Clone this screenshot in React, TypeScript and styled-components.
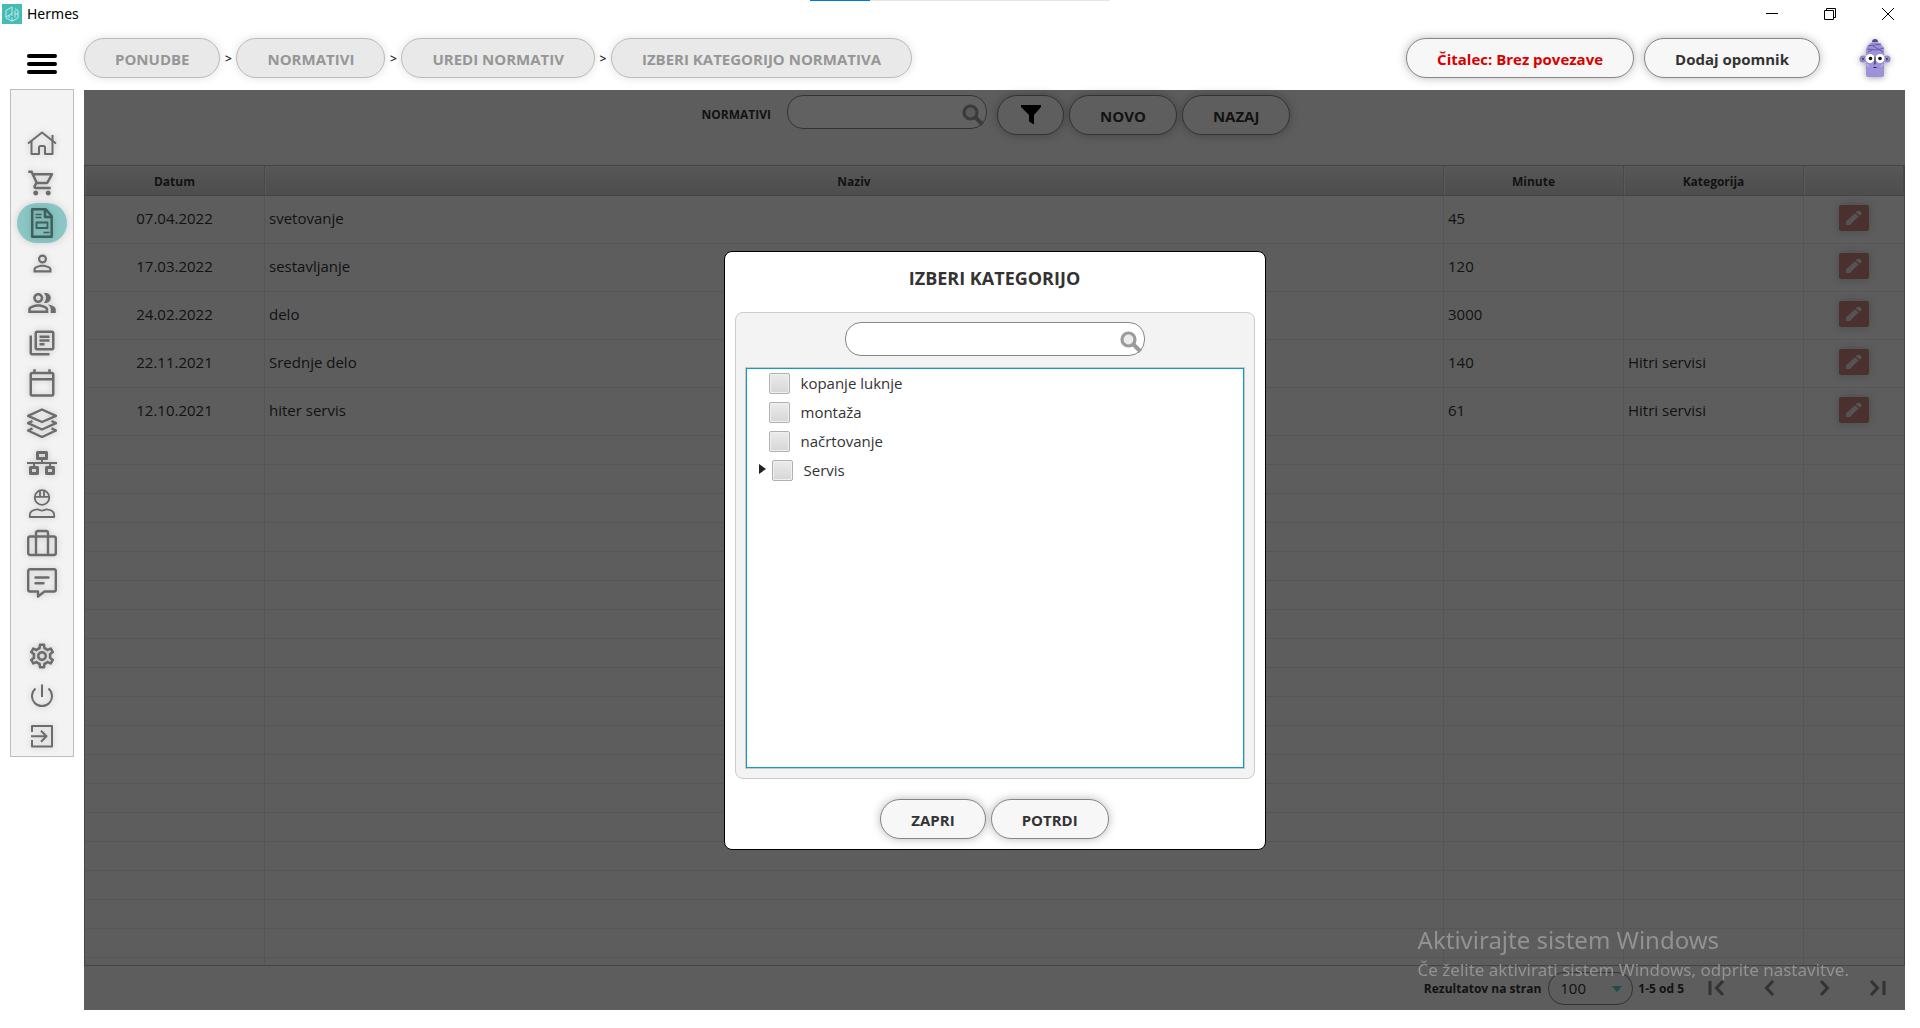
import React from "react";
import styled, { createGlobalStyle } from "styled-components";
import {
  MdOutlineShoppingCart,
  MdPersonOutline,
  MdOutlinePeopleAlt,
  MdOutlineLibraryBooks,
  MdOutlineCalendarToday,
  MdOutlineSettings,
} from "react-icons/md";

const GlobalStyle = createGlobalStyle`
  *, *::before, *::after { box-sizing: border-box; }
  body {
    margin: 0;
    background: #fff;
    color: #333;
    font-family: "Open Sans", "Noto Sans", sans-serif;
    font-size: 15px;
  }
  button, input, select { font: inherit; color: inherit; margin: 0; }
`;

/* ---------- window frame ---------- */

const Page = styled.div`
  display: flex;
  flex-direction: column;
  height: 100vh;
  min-height: 860px;
  overflow: hidden;
`;

const TitleBar = styled.div`
  position: relative;
  display: flex;
  align-items: center;
  justify-content: space-between;
  height: 28px;
  padding: 0 3px 0 2px;
`;

const AppName = styled.div`
  display: flex;
  align-items: center;
  gap: 5px;
  color: #000;
  font-family: "Noto Sans", sans-serif;
  font-size: 14px;
  line-height: 20px;
`;

const WindowControls = styled.div`
  display: flex;
`;

const WindowButton = styled.button`
  display: grid;
  place-items: center;
  width: 58px;
  height: 28px;
  padding: 0;
  border: 0;
  background: none;
`;

const LoadTrack = styled.div`
  position: absolute;
  top: 0;
  left: 50%;
  width: 300px;
  height: 1px;
  transform: translateX(-50%);
  background: #e6e6e6;
`;

const LoadValue = styled.div`
  width: 20%;
  height: 1px;
  background: #0078d7;
`;

/* ---------- shared controls ---------- */

const Pill = styled.button<{ $tone?: "muted" | "alert" }>`
  height: 40px;
  padding: 2px 30px 0;
  border: 1px solid ${(p) => (p.$tone === "muted" ? "#bbb" : "#868686")};
  border-radius: 20px;
  background: ${(p) => (p.$tone === "muted" ? "#e9e9e9" : "#f7f7f7")};
  box-shadow: 0 0 10px ${(p) => (p.$tone === "muted" ? "rgba(0,0,0,.12)" : "rgba(0,0,0,.28)")};
  color: ${(p) => (p.$tone === "muted" ? "#969696" : p.$tone === "alert" ? "#d90000" : "#333")};
  font-size: 15px;
  font-weight: 700;
  line-height: 20px;
  white-space: nowrap;
`;

const IconPill = styled(Pill)`
  display: grid;
  place-items: center;
  width: 67px;
  padding: 0;
`;

const SearchBox = styled.div<{ $width: number }>`
  position: relative;
  width: ${(p) => p.$width}px;
  height: 34px;

  svg {
    position: absolute;
    right: 3px;
    bottom: 3px;
  }
`;

const SearchInput = styled.input`
  display: block;
  width: 100%;
  height: 100%;
  padding: 0 28px 0 14px;
  border: 1px solid #868686;
  border-radius: 16px;
  background: #fff;
  outline: none;
`;

/* ---------- header ---------- */

const Header = styled.header`
  display: flex;
  align-items: flex-start;
  height: 61px;
  padding-top: 10px;
`;

const MenuButton = styled.button`
  display: grid;
  place-items: center;
  width: 84px;
  height: 51px;
  padding: 0;
  border: 0;
  background: none;
`;

const Breadcrumb = styled.nav`
  display: flex;
  align-items: center;
  flex: 1;
`;

const Separator = styled.span`
  width: 16px;
  color: #222;
  font-size: 12px;
  font-weight: 600;
  text-align: center;
`;

const HeaderActions = styled.div`
  display: flex;
  gap: 10px;
`;

const Avatar = styled.button`
  display: grid;
  place-items: center;
  width: 90px;
  height: 40px;
  padding: 0;
  border: 0;
  background: none;

  svg { filter: drop-shadow(0 1px 3px rgba(0, 0, 0, 0.35)); }
`;

/* ---------- body ---------- */

const Body = styled.div`
  display: flex;
  flex: 1;
  align-items: flex-start;
  min-height: 0;
`;

const Sidebar = styled.nav`
  display: flex;
  flex-direction: column;
  align-items: center;
  gap: 33px;
  width: 64px;
  margin: 0 10px;
  padding-top: 33px;
  border: 1px solid #bdbdbd;
  background: #f3f3f3;
`;

const SideGroup = styled.div`
  display: flex;
  flex-direction: column;
`;

const SideButton = styled.button<{ $active?: boolean }>`
  display: grid;
  place-items: center;
  width: 50px;
  height: 40px;
  padding: 0;
  border: 0;
  border-radius: 20px;
  background: ${(p) => (p.$active ? "#8ac7c4" : "none")};
  color: ${(p) => (p.$active ? "#3d5f5d" : "#6c6c6c")};
  box-shadow: ${(p) => (p.$active ? "0 0 8px rgba(0,0,0,.15)" : "none")};

  svg { filter: drop-shadow(0 0 3px rgba(0, 0, 0, 0.2)); }
`;

const Main = styled.main`
  position: relative;
  display: flex;
  flex: 1;
  flex-direction: column;
  align-self: stretch;
  min-width: 0;
  margin: 1px 15px 18px 0;
  background: #f3f3f3;
`;

const Toolbar = styled.div`
  display: flex;
  justify-content: center;
  height: 75px;
  padding: 5px 0 0 3px;
`;

const ToolbarLabel = styled.label`
  margin-right: 16px;
  font-size: 12px;
  font-weight: 700;
  line-height: 40px;
`;

const ToolbarButtons = styled.div`
  display: flex;
  gap: 5px;
  margin-left: 10px;
`;

const TableFrame = styled.div`
  flex: 1;
  min-height: 0;
  overflow: hidden;
  border: 1px solid #b4b4b4;
`;

const Table = styled.table`
  width: 100%;
  table-layout: fixed;
  border-collapse: separate;
  border-spacing: 0;
`;

const HeadCell = styled.th<{ $width?: number }>`
  width: ${(p) => (p.$width ? `${p.$width}px` : "auto")};
  height: 30px;
  padding: 2px 0 0;
  border-right: 1px solid #c0c0c0;
  border-bottom: 1px solid #b4b4b4;
  background: linear-gradient(#e6e6e6, #cacaca);
  box-shadow: inset 1px 1px 0 #ededed;
  font-size: 12px;
  font-weight: 700;
`;

const Cell = styled.td<{ $align?: "center" }>`
  height: 48px;
  padding: 0 4px 4px;
  border-right: 1px solid #e0e0e0;
  border-bottom: 1px solid #e3e3e3;
  line-height: 20px;
  text-align: ${(p) => p.$align ?? "left"};

  &:last-child { border-right-color: transparent; }
`;

const FillerCell = styled(Cell)`
  height: 29px;
`;

const EditButton = styled.button`
  display: inline-grid;
  place-items: center;
  width: 30px;
  height: 26px;
  padding: 0;
  border: 0;
  border-radius: 2px;
  background: #c67f7f;
  box-shadow: 0 0 8px rgba(0, 0, 0, 0.2);
  vertical-align: middle;
`;

const Pager = styled.footer`
  display: flex;
  align-items: center;
  justify-content: flex-end;
  height: 44px;
  font-size: 12px;
  font-weight: 700;
`;

const PageSize = styled.div`
  position: relative;
  width: 85px;
  height: 33px;
  margin: 0 5px 0 7px;

  svg {
    position: absolute;
    top: 14px;
    right: 11px;
    pointer-events: none;
  }
`;

const PageSelect = styled.select`
  width: 100%;
  height: 100%;
  padding: 0 0 0 11px;
  border: 1px solid #868686;
  border-radius: 16px;
  background: transparent;
  font-size: 15px;
  font-weight: 400;
  appearance: none;
`;

const PageInfo = styled.span`
  margin-right: 5px;
`;

const PagerButton = styled.button`
  display: grid;
  place-items: center;
  width: 54px;
  height: 44px;
  padding: 0;
  border: 0;
  background: none;
  color: #868686;
`;

/* ---------- dialog ---------- */

const Backdrop = styled.div`
  position: absolute;
  inset: 0;
  display: grid;
  place-items: center;
  background: rgba(0, 0, 0, 0.62);
`;

const Dialog = styled.section`
  display: flex;
  flex-direction: column;
  width: 542px;
  padding: 10px;
  border: 1px solid #000;
  border-radius: 8px;
  background: #fff;
`;

const DialogTitle = styled.h2`
  margin: 0 0 18px;
  font-size: 18px;
  line-height: 32px;
  text-align: center;
`;

const Picker = styled.div`
  display: flex;
  flex-direction: column;
  align-items: center;
  gap: 11px;
  padding: 9px;
  border: 1px solid #ccc;
  border-radius: 8px;
  background: #f3f3f3;
`;

const Tree = styled.ul`
  align-self: stretch;
  height: 402px;
  margin: 0;
  padding: 0;
  border: 1px solid #c8c8c8;
  background: #fff;
  box-shadow: inset 0 0 0 1px #0d9ccb;
  list-style: none;
`;

const TreeItem = styled.li`
  display: flex;
  align-items: center;
  height: 29px;
  padding-left: 12px;

  &:first-child { margin-top: 1px; }
`;

const Expander = styled.button`
  display: flex;
  width: 14px;
  height: 12px;
  padding: 0;
  border: 0;
  background: none;
`;

const TreeLabel = styled.label<{ $leaf: boolean }>`
  display: flex;
  align-items: center;
  gap: 11px;
  padding-left: ${(p) => (p.$leaf ? 11 : 0)}px;
  line-height: 20px;
`;

const Checkbox = styled.input`
  width: 21px;
  height: 21px;
  border: 1px solid #b0b0b0;
  border-radius: 2px;
  background: linear-gradient(#ebebeb, #d6d6d6);
  box-shadow: inset 0 0 0 1px #f0f0f0;
  appearance: none;
`;

const DialogActions = styled.div`
  display: flex;
  justify-content: center;
  gap: 5px;
  margin-top: 20px;
`;

const Watermark = styled.div`
  position: fixed;
  right: 71px;
  bottom: 45px;
  color: #929292;
  font-family: "Noto Sans", sans-serif;
  pointer-events: none;
`;

const WatermarkTitle = styled.p`
  margin: 0;
  font-size: 24px;
  line-height: 32px;
`;

const WatermarkText = styled.p`
  margin: 0;
  font-size: 17px;
  line-height: 27px;
`;

/* ---------- drawings ---------- */

const Stroke = ({ w = 2, children }: { w?: number; children: React.ReactNode }) => (
  <svg width="30" height="30" viewBox="0 0 30 30" fill="none" stroke="currentColor" strokeWidth={w} strokeLinejoin="round">
    {children}
  </svg>
);

const HomeIcon = () => (
  <Stroke>
    <path d="M1 15.500 15 4.500 29 15.500" />
    <path d="M4.500 13v13H12v-6.500q0-1.500 1.500-1.500h3q1.500 0 1.500 1.500V26h7.500V7" />
  </Stroke>
);

const DocumentIcon = () => (
  <Stroke w={2.5}>
    <path d="M5.200 1.300h13.500l6 7v20.400H5.200z" />
    <path d="M18 1.500v7.500h7" />
    <path d="M8.500 6.500h6M8.500 9.500h6M16.500 24.500h6" strokeWidth="1.600" />
    <path d="M9.500 14.500h11v5.500h-11z" strokeWidth="1.800" />
  </Stroke>
);

const LayersIcon = () => (
  <Stroke w={2.4}>
    <path d="M15 1.500 29 7.800 15 14 1 7.800z" />
    <path d="M5.500 13 1 15.200l14 6.300 14-6.300L24.500 13" />
    <path d="M5.500 20.300 1 22.500l14 6.500 14-6.500-4.500-2.200" />
  </Stroke>
);

const NetworkIcon = () => (
  <Stroke>
    <path d="M10.500 4.500h9v6h-9zM3.500 19.500h7v6h-7zM19.500 19.500h7v6h-7z" strokeWidth="3" />
    <path d="M0 15h30M15 11v4M7 15v4M23 15v4" />
  </Stroke>
);

const WorkerIcon = () => (
  <Stroke w={1.8}>
    <circle cx="15" cy="9.500" r="7.300" />
    <path d="M7 8.800h16M13 8.500V2.300M17 8.500V2.300" />
    <path d="M2.800 29v-2q0-5 7.700-5.700 4.500 2.500 9 0 7.700.7 7.700 5.700v2z" />
  </Stroke>
);

const LuggageIcon = () => (
  <Stroke w={2.4}>
    <rect x="1.200" y="8.500" width="27.600" height="18.500" rx="2" />
    <path d="M9 27V5q0-2 2-2h8q2 0 2 2v22" />
  </Stroke>
);

const MessageIcon = () => (
  <Stroke w={2.4}>
    <path d="M3 1.200h24q1.800 0 1.800 2v18.300q0 2-1.800 2h-9.500L11 28.500v-5H3q-1.800 0-1.800-2V3.200q0-2 1.800-2z" />
    <path d="M8.500 9.500h13M8.500 15.200h8" strokeLinecap="round" />
  </Stroke>
);

const PowerIcon = () => (
  <Stroke>
    <path d="M15 3.500V16M8.500 7.500a10 10 0 1 0 13 0" />
  </Stroke>
);

const ExitIcon = () => (
  <Stroke>
    <path d="M5 11V5h20v20.500H5V19M4 15.200h15M14 9.700l5.500 5.500-5.500 5.500" />
  </Stroke>
);

const SearchIcon = () => (
  <svg width="22" height="22" viewBox="0 0 22 22" fill="none" stroke="#9c9c9c" strokeWidth="3.200">
    <circle cx="8.500" cy="8.500" r="6.500" fill="#ececec" />
    <path d="m13 13 7.500 7.500" strokeWidth="4" />
  </svg>
);

const FunnelIcon = () => (
  <svg width="20" height="20" viewBox="0 0 20 20">
    <path d="M0 0h20v2l-7 8v9.500l-5-3V10L0 2z" fill="#000" />
  </svg>
);

const PencilIcon = () => (
  <svg width="18" height="16" viewBox="0 0 18 16" fill="#dcdcdc">
    <path d="M1 15v-3.500L9.800 3.200l3.800 3L5 15zM10.800 2.300l1.200-1q1.500-.9 3 0l1.200 1q1 1.200 0 2.200l-1.400 1.100z" />
  </svg>
);

const Logo = () => (
  <svg width="20" height="20" viewBox="0 0 20 20" fill="none" stroke="#c4ebe8" strokeWidth="1">
    <rect width="20" height="20" fill="#45bdb7" stroke="none" />
    <path d="M10 3 4 6.500v7.500l6 3.200 6-3.200V6.500l-3-1.800M10 3v9M4 13l6-3.500M10 17v-3.500M13 6.500v7M7 11.500V14M16 10h-3" />
  </svg>
);

const AvatarDrawing = () => (
  <svg width="32" height="38" viewBox="0 0 32 38">
    <circle cx="4" cy="20" r="3.500" fill="#9087cf" />
    <circle cx="28" cy="20" r="3.500" fill="#9087cf" />
    <circle cx="4" cy="20" r="1" fill="#40386e" />
    <circle cx="28" cy="20" r="1" fill="#40386e" />
    <path d="M7 36V11q2-8 9-8t9 8v25q0 2-2 2H9q-2 0-2-2z" fill="#9d92d8" />
    <path d="M13 3q0-3 3-3t3 3z" fill="#544a94" />
    <path d="M9 7l13-2M8 10l10 1 7-2M14 7l10 6M9 13l4-2" stroke="#665ba8" fill="none" />
    <circle cx="11" cy="19.500" r="4.500" fill="#fff" />
    <circle cx="21" cy="19.500" r="4.500" fill="#fff" />
    <circle cx="11.500" cy="19.500" r="1.800" fill="#111" />
    <circle cx="21" cy="19.500" r="1.800" fill="#111" />
    <path d="M16 18v7h-1M14.500 28.500h3" stroke="#2b2454" fill="none" />
    <path d="M8 25l2 3M24 25l-2 3" stroke="#c9c2ee" fill="none" />
  </svg>
);

const Chevron = ({ d }: { d: string }) => (
  <svg width="18" height="18" viewBox="0 0 18 18" fill="none" stroke="currentColor" strokeWidth="3">
    <path d={d} />
  </svg>
);

/* ---------- data ---------- */

const crumbs = ["PONUDBE", "NORMATIVI", "UREDI NORMATIV", "IZBERI KATEGORIJO NORMATIVA"];

const mainMenu = [
  { name: "Domov", icon: <HomeIcon /> },
  { name: "Prodaja", icon: <MdOutlineShoppingCart size={30} /> },
  { name: "Ponudbe", icon: <DocumentIcon />, active: true },
  { name: "Stranka", icon: <MdPersonOutline size={27} /> },
  { name: "Stranke", icon: <MdOutlinePeopleAlt size={30} /> },
  { name: "Dokumenti", icon: <MdOutlineLibraryBooks size={30} /> },
  { name: "Koledar", icon: <MdOutlineCalendarToday size={30} /> },
  { name: "Zaloga", icon: <LayersIcon /> },
  { name: "Struktura", icon: <NetworkIcon /> },
  { name: "Delavci", icon: <WorkerIcon /> },
  { name: "Potovanja", icon: <LuggageIcon /> },
  { name: "Sporočila", icon: <MessageIcon /> },
];

const systemMenu = [
  { name: "Nastavitve", icon: <MdOutlineSettings size={30} /> },
  { name: "Izklop", icon: <PowerIcon /> },
  { name: "Odjava", icon: <ExitIcon /> },
];

const norms = [
  { date: "07.04.2022", name: "svetovanje", minutes: 45, category: "" },
  { date: "17.03.2022", name: "sestavljanje", minutes: 120, category: "" },
  { date: "24.02.2022", name: "delo", minutes: 3000, category: "" },
  { date: "22.11.2021", name: "Srednje delo", minutes: 140, category: "Hitri servisi" },
  { date: "12.10.2021", name: "hiter servis", minutes: 61, category: "Hitri servisi" },
];

const fillerRows = Array.from({ length: 40 }, (_, i) => i);

const categories = [
  { name: "kopanje luknje", leaf: true },
  { name: "montaža", leaf: true },
  { name: "načrtovanje", leaf: true },
  { name: "Servis", leaf: false },
];

const pagerButtons = [
  { name: "Prva stran", d: "M3 2v14M16 2 9.500 9l6.500 7" },
  { name: "Prejšnja stran", d: "M12 2 5.500 9l6.500 7" },
  { name: "Naslednja stran", d: "M6 2l6.500 7L6 16" },
  { name: "Zadnja stran", d: "M2 2l6.500 7L2 16M15 2v14" },
];

/* ---------- app ---------- */

export default function App() {
  return (
    <Page>
      <GlobalStyle />
      <TitleBar>
        <AppName>
          <Logo />
          Hermes
        </AppName>
        <LoadTrack>
          <LoadValue />
        </LoadTrack>
        <WindowControls>
          <WindowButton aria-label="Pomanjšaj">
            <svg width="12" height="12" stroke="#000"><path d="M0 5.500h12" /></svg>
          </WindowButton>
          <WindowButton aria-label="Obnovi">
            <svg width="12" height="12" fill="none" stroke="#000">
              <path d="M.5 2.500h9v9h-9zM2.500 2.500v-2h9v9h-2" />
            </svg>
          </WindowButton>
          <WindowButton aria-label="Zapri okno">
            <svg width="12" height="12" stroke="#000"><path d="M0 0l12 12M12 0 0 12" /></svg>
          </WindowButton>
        </WindowControls>
      </TitleBar>

      <Header>
        <MenuButton aria-label="Meni">
          <svg width="30" height="20">
            <rect width="30" height="4" rx="2" />
            <rect y="8" width="30" height="4" rx="2" />
            <rect y="16" width="30" height="4" rx="2" />
          </svg>
        </MenuButton>
        <Breadcrumb>
          {crumbs.map((crumb, i) => (
            <React.Fragment key={crumb}>
              {i > 0 && <Separator>&gt;</Separator>}
              <Pill $tone="muted">{crumb}</Pill>
            </React.Fragment>
          ))}
        </Breadcrumb>
        <HeaderActions>
          <Pill $tone="alert">Čitalec: Brez povezave</Pill>
          <Pill>Dodaj opomnik</Pill>
          <Avatar aria-label="Uporabnik">
            <AvatarDrawing />
          </Avatar>
        </HeaderActions>
      </Header>

      <Body>
        <Sidebar>
          {[mainMenu, systemMenu].map((group, i) => (
            <SideGroup key={i}>
              {group.map((item) => (
                <SideButton key={item.name} aria-label={item.name} $active={"active" in item}>
                  {item.icon}
                </SideButton>
              ))}
            </SideGroup>
          ))}
        </Sidebar>

        <Main>
          <Toolbar>
            <ToolbarLabel htmlFor="norm-search">NORMATIVI</ToolbarLabel>
            <SearchBox $width={200}>
              <SearchInput id="norm-search" type="text" />
              <SearchIcon />
            </SearchBox>
            <ToolbarButtons>
              <IconPill aria-label="Filter">
                <FunnelIcon />
              </IconPill>
              <Pill>NOVO</Pill>
              <Pill>NAZAJ</Pill>
            </ToolbarButtons>
          </Toolbar>

          <TableFrame>
            <Table>
              <thead>
                <tr>
                  <HeadCell $width={180}>Datum</HeadCell>
                  <HeadCell>Naziv</HeadCell>
                  <HeadCell $width={180}>Minute</HeadCell>
                  <HeadCell $width={180}>Kategorija</HeadCell>
                  <HeadCell $width={100} aria-label="Uredi" />
                </tr>
              </thead>
              <tbody>
                {norms.map((norm) => (
                  <tr key={norm.date}>
                    <Cell $align="center">{norm.date}</Cell>
                    <Cell>{norm.name}</Cell>
                    <Cell>{norm.minutes}</Cell>
                    <Cell>{norm.category}</Cell>
                    <Cell $align="center">
                      <EditButton aria-label={`Uredi ${norm.name}`}>
                        <PencilIcon />
                      </EditButton>
                    </Cell>
                  </tr>
                ))}
                {fillerRows.map((row) => (
                  <tr key={row} aria-hidden="true">
                    <FillerCell />
                    <FillerCell />
                    <FillerCell />
                    <FillerCell />
                    <FillerCell />
                  </tr>
                ))}
              </tbody>
            </Table>
          </TableFrame>

          <Pager>
            <label htmlFor="page-size">Rezultatov na stran</label>
            <PageSize>
              <PageSelect id="page-size" defaultValue="100">
                <option>100</option>
              </PageSelect>
              <svg width="10" height="6">
                <path d="M0 0h10L5 6z" fill="#4fcdc4" />
              </svg>
            </PageSize>
            <PageInfo>1-5 od 5</PageInfo>
            {pagerButtons.map((button) => (
              <PagerButton key={button.name} aria-label={button.name}>
                <Chevron d={button.d} />
              </PagerButton>
            ))}
          </Pager>

          <Backdrop>
            <Dialog role="dialog" aria-labelledby="dialog-title">
              <DialogTitle id="dialog-title">IZBERI KATEGORIJO</DialogTitle>
              <Picker>
                <SearchBox $width={300}>
                  <SearchInput type="text" aria-label="Iskanje kategorije" />
                  <SearchIcon />
                </SearchBox>
                <Tree>
                  {categories.map((category) => (
                    <TreeItem key={category.name}>
                      {!category.leaf && (
                        <Expander aria-label={`Razširi ${category.name}`}>
                          <svg width="8" height="10">
                            <path d="M1 0l7 5-7 5z" fill="#222" />
                          </svg>
                        </Expander>
                      )}
                      <TreeLabel $leaf={category.leaf}>
                        <Checkbox type="checkbox" />
                        {category.name}
                      </TreeLabel>
                    </TreeItem>
                  ))}
                </Tree>
              </Picker>
              <DialogActions>
                <Pill>ZAPRI</Pill>
                <Pill>POTRDI</Pill>
              </DialogActions>
            </Dialog>
          </Backdrop>
        </Main>
      </Body>

      <Watermark>
        <WatermarkTitle>Aktivirajte sistem Windows</WatermarkTitle>
        <WatermarkText>Če želite aktivirati sistem Windows, odprite nastavitve.</WatermarkText>
      </Watermark>
    </Page>
  );
}
